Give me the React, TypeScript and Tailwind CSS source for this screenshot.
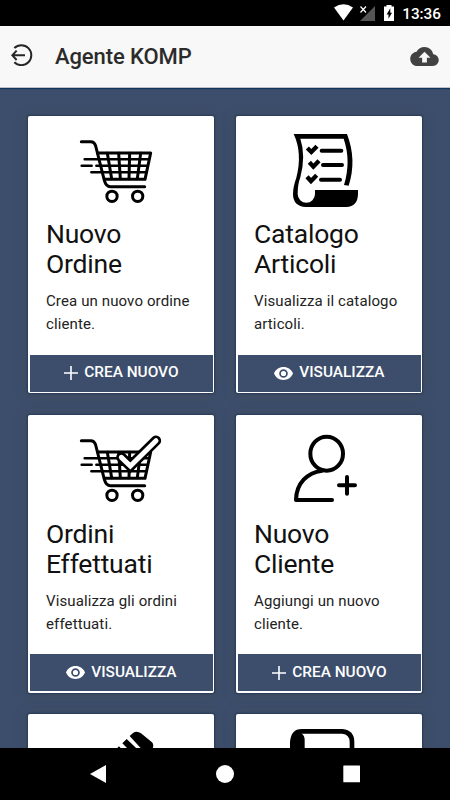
import React from "react";

const CartBody = () => (
  <g fill="none" stroke="#000" strokeWidth="9" strokeLinecap="round" strokeLinejoin="round">
    <path d="M34 35H62Q73 35 77 48L103 151Q108 170 121 170H224" />
    <path d="M83 69H242L225 148H105" />
    <path strokeWidth="7.5" d="M44 88H237M35 107H65M79 107H233M64 127H229" />
    <path strokeWidth="9" d="M112 70L125 146M146 70L151 146M179 70L177 146M212 70L202 146" />
    <circle cx="126" cy="199" r="15.5" />
    <circle cx="203" cy="199" r="15.5" />
  </g>
);

const CartIcon = () => (
  <svg viewBox="3 -12 300 270" className="h-[90px] w-[100px]">
    <CartBody />
  </svg>
);

const CartDoneIcon = () => (
  <svg viewBox="3 0 300 270" className="h-[90px] w-[100px]">
    <g transform="translate(0 12)">
      <CartBody />
    </g>
    <path d="M154 97L181 123L258 47" fill="none" stroke="#000" strokeWidth="31" strokeLinecap="round" />
    <path d="M154 97L181 123L258 47" fill="none" stroke="#fff" strokeWidth="15" strokeLinecap="round" />
  </svg>
);

const CatalogIcon = () => (
  <svg viewBox="-3 3 300 270" className="h-[90px] w-[100px]">
    <path d="M41 27H201Q231 105 206 182L192 180Q214 108 191 41H61Q78 91 61 157Q53 178 53 207A23 23 0 0 0 105 207V195H234V207Q233 245 199 246H78Q39 244 39 207Q39 186 49 158Q68 84 41 27Z" />
    <g fill="none" stroke="#000" strokeWidth="12" strokeLinecap="round" strokeLinejoin="round">
      <path d="M125 77H184M129 120H186M123 164H180" />
      <path strokeWidth="13" strokeLinecap="butt" strokeLinejoin="miter" d="M82 69L94 81L111 64M88 112L100 125L117 107M81 155L93 168L110 151" />
    </g>
  </svg>
);

const ClientIcon = () => (
  <svg viewBox="-3 0 300 270" className="h-[90px] w-[100px]" fill="none" stroke="#000" strokeWidth="12" strokeLinecap="round" strokeLinejoin="round">
    <ellipse cx="140" cy="86" rx="49" ry="51" />
    <path d="M126 137C82 143 49 174 48 225H156M201 156V206M177 181H225" />
  </svg>
);

const PencilIcon = () => (
  <svg viewBox="153 72 300 270" className="h-[90px] w-[100px]">
    <path d="M329 108L339 99Q351 91 363 100L395 126Q403 133 398 145L380 164ZM307 130L320 117L365 160L350 173ZM285 151L297 139L340 182L326 195Z" />
  </svg>
);

const ScrollIcon = () => (
  <svg viewBox="162 72 300 270" className="h-[90px] w-[100px]">
    <path d="M228 94H352Q381 97 381 126V230" fill="none" stroke="#000" strokeWidth="14" />
    <path d="M195 220V126Q198 87 230 87V101Q239 106 239 120V220Z" />
  </svg>
);

const Plus = () => (
  <svg viewBox="0 0 14 14" className="mr-[6.5px] h-[14px] w-[14px]" stroke="#fff" strokeWidth="1.6">
    <path d="M0 7H14M7 0V14" />
  </svg>
);

const Eye = () => (
  <svg viewBox="1 4.5 22 15" className="mr-[6.5px] h-[13px] w-[19px]" fill="#fff">
    <path d="M12 4.5C7 4.5 2.7 7.6 1 12c1.7 4.4 6 7.5 11 7.5s9.3-3.1 11-7.5c-1.7-4.4-6-7.5-11-7.5zM12 17a5 5 0 1 1 0-10 5 5 0 0 1 0 10zm0-8a3 3 0 1 0 0 6 3 3 0 0 0 0-6z" />
  </svg>
);

type CardProps = {
  icon: React.ReactNode;
  title: [string, string];
  text: [string, string];
  action: "new" | "view";
  tall?: boolean;
};

const Card = ({ icon, title, text, action, tall }: CardProps) => (
  <article className="flex flex-col rounded-[2px] bg-white pr-[1.3px] pl-[2px] pt-[10px] pb-[1.5px] shadow-[0_0_2px_0.5px_#263b5c,0_1px_12px_rgba(75,75,75,0.6)]">
    <div className={`flex shrink-0 justify-center pr-[1.4px] ${tall ? "h-[91px]" : "h-[90px]"}`}>{icon}</div>
    <h2 className="mt-[3px] pl-[15.7px] text-[26.5px] leading-[30px] tracking-[-0.2px] whitespace-nowrap text-[#111]">
      {title[0]}
      <br />
      {title[1]}
    </h2>
    <p className="mt-[11px] pl-[15.7px] text-[15px] leading-[23px] tracking-[0.12px] whitespace-nowrap text-[#222]">
      {text[0]}
      <br />
      {text[1]}
    </p>
    <button className="mt-auto flex h-[37px] items-center justify-center bg-[#3c4e6c] pr-[1px] text-[15.4px] font-medium text-white">
      {action === "new" ? <Plus /> : <Eye />}
      <span>{action === "new" ? "CREA NUOVO" : "VISUALIZZA"}</span>
    </button>
  </article>
);

export default function App() {
  return (
    <div className="flex h-[800px] w-[450px] flex-col overflow-hidden bg-black font-['Roboto','Liberation_Sans',sans-serif]">
      <div className="flex h-[26px] shrink-0 items-center justify-end pr-[9px] text-white">
        <svg viewBox="0 0 63 20" className="mr-[5px] h-[20px] w-[63px]">
          <path d="M0 4.5Q9.5-1.8 19 4.5L9.5 17.5Z" fill="#fff" />
          <path d="M41 3V18H26Z" fill="#555" />
          <path d="M26.5 3.5L32 9.5M32 3.5L26.5 9.5" stroke="#fff" strokeWidth="1.2" />
          <path d="M50 3.5H52.5V2H57.5V3.5H60V18H50Z" fill="#fff" />
          <path d="M56.3 5.3L52.6 11.4H54.5V15.8L58 9.8H56.3Z" fill="#000" />
        </svg>
        <span className="mt-[2px] text-[15.3px] font-medium leading-5">13:36</span>
      </div>
      <header className="relative z-10 flex h-[62px] shrink-0 items-center border-b border-[#bfc3c7] bg-[#f8f8f8] pr-[11px] pl-[11px] shadow-[0_1px_1px_#12365f]">
        <svg viewBox="0 0 66 68" className="mt-[-3px] h-[22.67px] w-[22px]" fill="none" stroke="#262626" strokeWidth="6">
          <path d="M10 12A30 30 0 1 1 10 55" />
          <path d="M42 34H4M17 20L4 34L17 48" />
        </svg>
        <h1 className="mt-[1px] ml-[22px] grow text-[22px] font-medium leading-7 tracking-[-0.1px] text-[#2b2b2b]">Agente KOMP</h1>
        <svg viewBox="0 4 24 16" className="h-[19px] w-[29px]" fill="#424242">
          <path d="M19.35 10.04C18.67 6.59 15.64 4 12 4 9.11 4 6.6 5.64 5.35 8.04 2.34 8.36 0 10.91 0 14c0 3.31 2.69 6 6 6h13c2.76 0 5-2.24 5-5 0-2.64-2.05-4.78-4.65-4.96zM14 13v4h-4v-4H7l5-5 5 5h-3z" />
        </svg>
      </header>
      <main className="grid h-[660px] shrink-0 grid-cols-[186px_186px] grid-rows-[277px_278px_32px] content-start gap-x-[22px] gap-y-[21.5px] overflow-hidden bg-[#3c4e6c] pt-[28px] pl-[28.3px]">
        <Card icon={<CartIcon />} title={["Nuovo", "Ordine"]} text={["Crea un nuovo ordine", "cliente."]} action="new" />
        <Card icon={<CatalogIcon />} title={["Catalogo", "Articoli"]} text={["Visualizza il catalogo", "articoli."]} action="view" />
        <Card tall icon={<CartDoneIcon />} title={["Ordini", "Effettuati"]} text={["Visualizza gli ordini", "effettuati."]} action="view" />
        <Card tall icon={<ClientIcon />} title={["Nuovo", "Cliente"]} text={["Aggiungi un nuovo", "cliente."]} action="new" />
        <div className="h-[32px]">
          <div className="rounded-t-[2px] bg-white pt-[10px] shadow-[0_0_2px_0.5px_#263b5c,0_1px_12px_rgba(75,75,75,0.6)]">
            <div className="flex h-[90px] justify-center"><PencilIcon /></div>
          </div>
        </div>
        <div className="h-[32px]">
          <div className="rounded-t-[2px] bg-white pt-[10px] shadow-[0_0_2px_0.5px_#263b5c,0_1px_12px_rgba(75,75,75,0.6)]">
            <div className="flex h-[90px] justify-center"><ScrollIcon /></div>
          </div>
        </div>
      </main>
      <nav className="h-[52px] shrink-0">
        <svg viewBox="0 0 450 52" className="h-[52px] w-[450px]" fill="#fff">
          <path d="M90 26L106 17V35Z" />
          <circle cx="225" cy="26" r="9" />
          <rect x="343.3" y="17.5" width="16.7" height="16.7" rx="0.5" />
        </svg>
      </nav>
    </div>
  );
}
